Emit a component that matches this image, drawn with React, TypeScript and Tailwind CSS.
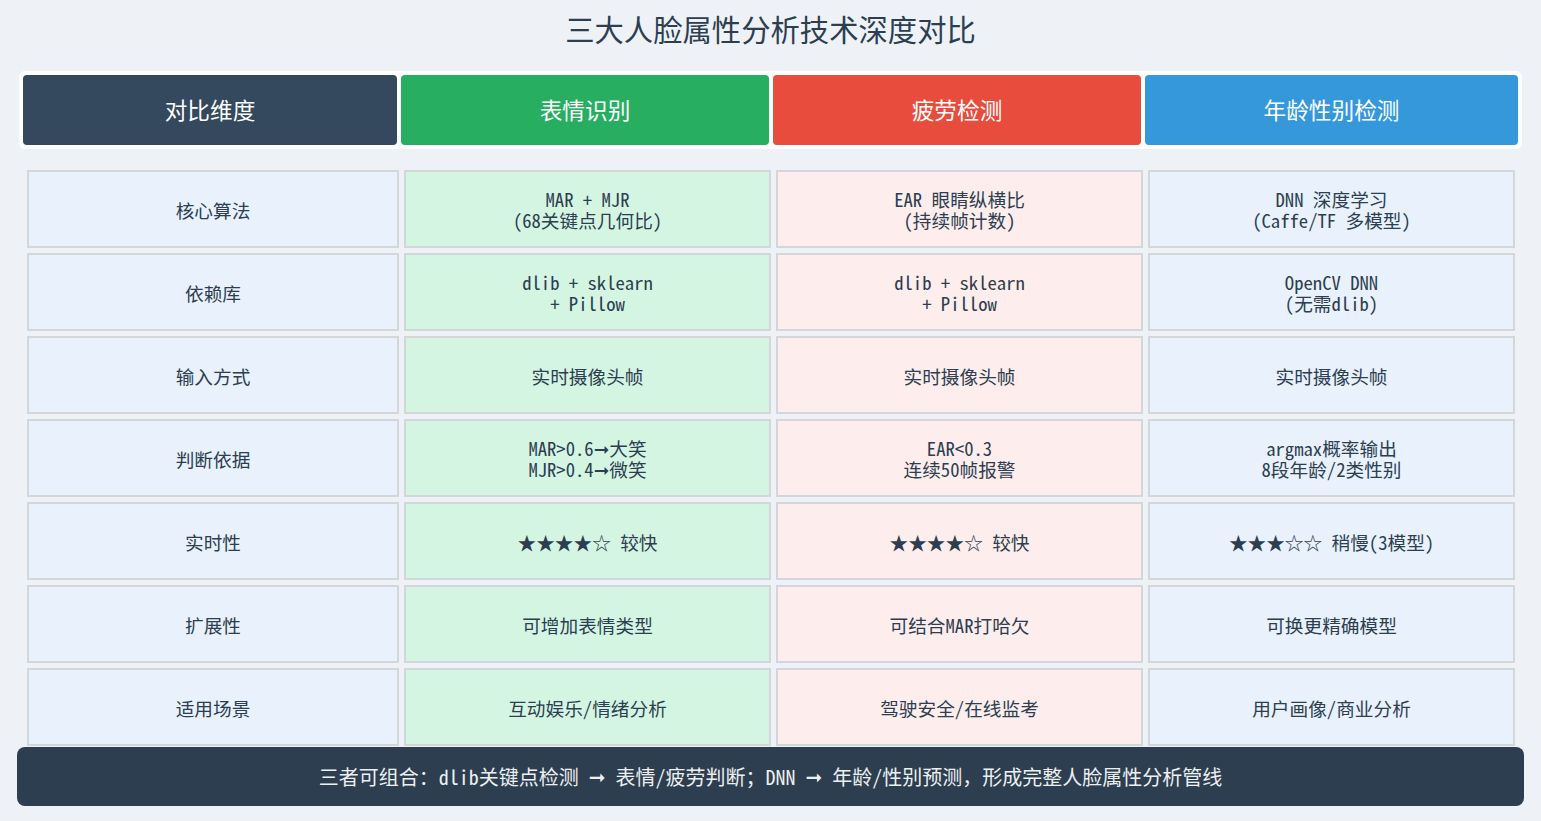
import React from "react";

type Row = {
  label: string;
  expr: React.ReactNode[];
  fatigue: React.ReactNode[];
  age: React.ReactNode[];
};

const Arrow = () => <span className="font-['DejaVu_Sans'] leading-none">➞</span>;

const rows: Row[] = [
  {
    label: "核心算法",
    expr: ["MAR + MJR", "(68关键点几何比)"],
    fatigue: ["EAR 眼睛纵横比", "(持续帧计数)"],
    age: ["DNN 深度学习", "(Caffe/TF 多模型)"],
  },
  {
    label: "依赖库",
    expr: ["dlib + sklearn", "+ Pillow"],
    fatigue: ["dlib + sklearn", "+ Pillow"],
    age: ["OpenCV DNN", "(无需dlib)"],
  },
  {
    label: "输入方式",
    expr: ["实时摄像头帧"],
    fatigue: ["实时摄像头帧"],
    age: ["实时摄像头帧"],
  },
  {
    label: "判断依据",
    expr: [
      <>MAR&gt;0.6<Arrow />大笑</>,
      <>MJR&gt;0.4<Arrow />微笑</>,
    ],
    fatigue: ["EAR<0.3", "连续50帧报警"],
    age: ["argmax概率输出", "8段年龄/2类性别"],
  },
  {
    label: "实时性",
    expr: ["★★★★☆ 较快"],
    fatigue: ["★★★★☆ 较快"],
    age: ["★★★☆☆ 稍慢(3模型)"],
  },
  {
    label: "扩展性",
    expr: ["可增加表情类型"],
    fatigue: ["可结合MAR打哈欠"],
    age: ["可换更精确模型"],
  },
  {
    label: "适用场景",
    expr: ["互动娱乐/情绪分析"],
    fatigue: ["驾驶安全/在线监考"],
    age: ["用户画像/商业分析"],
  },
];

const Cell = ({ lines, bg }: { lines: React.ReactNode[]; bg: string }) => (
  <div
    className={`h-[78px] flex flex-col items-center justify-center border-2 border-[#d4d7da] text-[18.67px] leading-[21px] text-[#2c3e50] whitespace-pre ${bg}`}
  >
    {lines.map((l, i) => (
      <span key={i} className="h-[21px]">{l}</span>
    ))}
  </div>
);

export default function App() {
  return (
    <div
      className="relative min-h-screen bg-[#eef2f7] overflow-hidden"
      style={{ fontFamily: '"Noto Sans Mono CJK SC", "Noto Sans CJK SC", monospace' }}
    >
      <h1 className="pt-[9px] h-[71px] text-center text-[29.33px] leading-[38px] text-[#2c3e50]">
        三大人脸属性分析技术深度对比
      </h1>

      <div className="mx-[19px] p-[4px] bg-white rounded-md">
        <div className="grid grid-cols-[374px_368px_368px_1fr] gap-[4px] h-[70px] text-[22.67px] text-white">
          <div className="bg-[#34495e] rounded-sm flex items-center justify-center">对比维度</div>
          <div className="bg-[#27ae60] rounded-sm flex items-center justify-center">表情识别</div>
          <div className="bg-[#e74c3c] rounded-sm flex items-center justify-center">疲劳检测</div>
          <div className="bg-[#3498db] rounded-sm flex items-center justify-center">年龄性别检测</div>
        </div>
      </div>

      <div className="mt-[21px] ml-[27px] mr-[26px] flex flex-col gap-[5px]">
        {rows.map((r) => (
          <div key={r.label} className="grid grid-cols-[372px_1fr_1fr_1fr] gap-[5px]">
            <Cell lines={[r.label]} bg="bg-[#e8f1fc]" />
            <Cell lines={r.expr} bg="bg-[#d5f5e3]" />
            <Cell lines={r.fatigue} bg="bg-[#fdedec]" />
            <Cell lines={r.age} bg="bg-[#e8f1fc]" />
          </div>
        ))}
      </div>

      <div className="absolute left-[17px] right-[17px] bottom-[15px] h-[59px] rounded-lg bg-[#2c3e50] flex items-center justify-center text-[20px] text-[#ecf0f1] whitespace-pre">
        三者可组合：dlib关键点检测 <Arrow /> 表情/疲劳判断；DNN <Arrow /> 年龄/性别预测，形成完整人脸属性分析管线
      </div>
    </div>
  );
}
